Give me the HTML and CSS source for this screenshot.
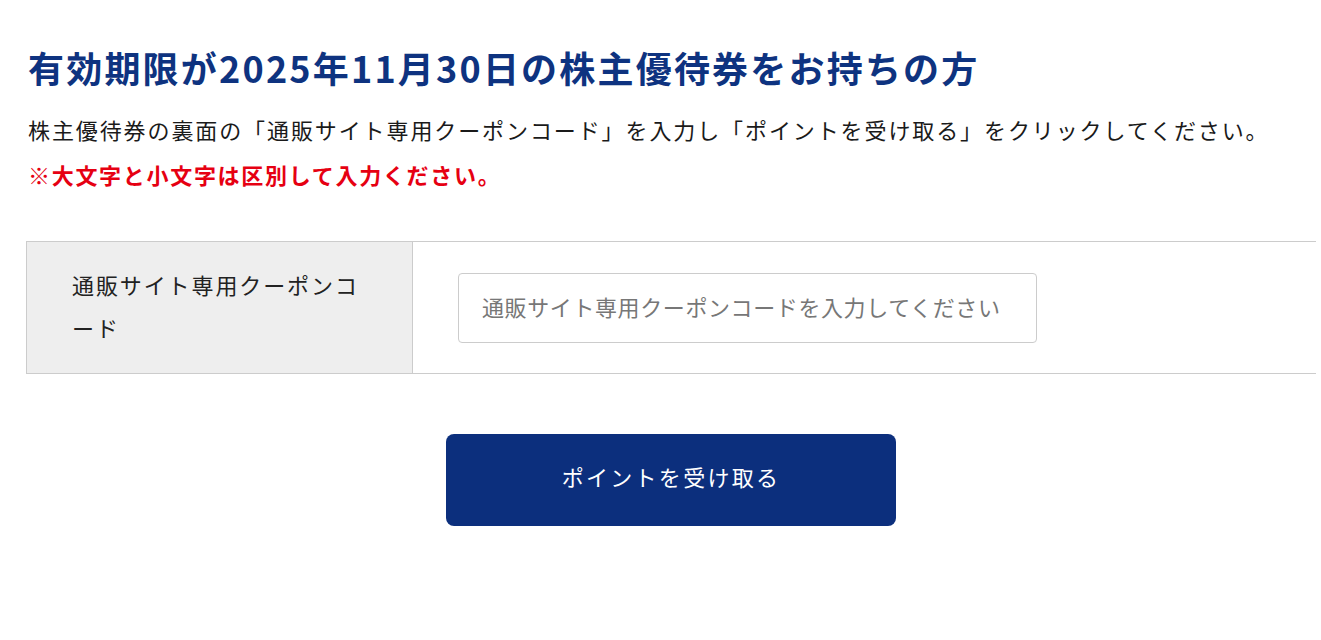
FILE: index.html
```html
<!DOCTYPE html>
<html lang="ja">
<head>
<meta charset="utf-8">
<link rel="stylesheet" href="styles.css">
</head>
<body>
<main class="page">
  <h1 class="title">有効期限が2025年11月30日の株主優待券をお持ちの方</h1>
  <p class="lead">株主優待券の裏面の「通販サイト専用クーポンコード」を入力し「ポイントを受け取る」をクリックしてください。<br><span class="note">※大文字と小文字は区別して入力ください。</span></p>
  <div class="form-table">
    <div class="label-cell">通販サイト専用クーポンコード</div>
    <div class="field-cell">
      <input class="code-input" type="text" placeholder="通販サイト専用クーポンコードを入力してください">
    </div>
  </div>
  <div class="actions">
    <button class="submit" type="button">ポイントを受け取る</button>
  </div>
</main>
</body>
</html>
```

FILE: styles.css
```css
html, body {
  margin: 0;
  padding: 0;
  background: #fff;
}
body {
  font-family: "Noto Sans CJK JP", "Noto Sans", sans-serif;
  color: #222;
}
.page {
  padding: 41px 5px 0 26px;
}
.title {
  margin: 0 0 0 2px;
  font-size: 36px;
  line-height: 53px;
  font-weight: 700;
  color: #0e3380;
  letter-spacing: 2.2px;
}
.lead {
  margin: 13px 0 0 2px;
  font-size: 22px;
  line-height: 45px;
  letter-spacing: 1.9px;
  color: #1a1a1a;
}
.note {
  color: #e60012;
  font-weight: 700;
  letter-spacing: 1.7px;
}
.form-table {
  margin-top: 44px;
  display: grid;
  grid-template-columns: 387px 1fr;
  border-top: 1px solid #cccccc;
  border-bottom: 1px solid #cccccc;
  height: 131px;
}
.label-cell {
  background: #eeeeee;
  border-left: 1px solid #cccccc;
  border-right: 1px solid #cccccc;
  padding: 0 40px 4px 45px;
  display: flex;
  align-items: center;
  font-size: 22px;
  line-height: 43px;
  letter-spacing: 1.9px;
  color: #222;
}
.field-cell {
  display: flex;
  align-items: center;
  padding-left: 45px;
}
.code-input {
  box-sizing: border-box;
  width: 579px;
  height: 70px;
  border: 1px solid #cccccc;
  border-radius: 4px;
  padding: 0 23px 4px;
  font-family: "Noto Sans CJK JP", "Noto Sans", sans-serif;
  font-size: 22px;
  letter-spacing: 0.6px;
  color: #333;
  outline: none;
}
.code-input::placeholder {
  color: #777;
}
.actions {
  display: flex;
  justify-content: center;
  margin-top: 60px;
}
.submit {
  width: 450px;
  height: 92px;
  padding: 0 0 8px;
  background: #0c2f7d;
  color: #fff;
  border: none;
  border-radius: 8px;
  font-family: "Noto Sans CJK JP", "Noto Sans", sans-serif;
  font-size: 22px;
  letter-spacing: 2.3px;
  cursor: pointer;
}
```
